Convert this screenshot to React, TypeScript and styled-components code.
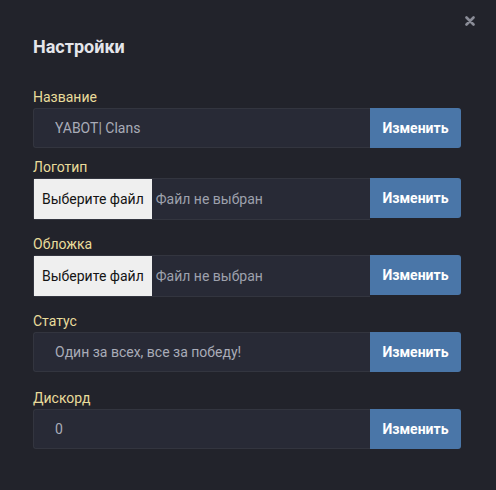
import * as React from 'react'
import styled, { createGlobalStyle } from 'styled-components'

const GlobalStyle = createGlobalStyle`
html, body {
    margin: 0;
    padding: 0;
    background: #22232b;
}
body {
    font-family: Roboto, "Noto Sans", "Liberation Sans", sans-serif;
    width: 496px;
    height: 490px;
    overflow: hidden;
}
`

const Panel = styled.div`
position: relative;
box-sizing: border-box;
width: 496px;
height: 490px;
padding: 36px 35px 0 33px;
background: #22232b;
`

const Title = styled.div`
font-size: 18px;
line-height: 21px;
font-weight: 700;
color: #e4e5ea;
`

const Close = styled.div`
position: absolute;
top: 16px;
right: 21px;
width: 10px;
height: 10px;
cursor: pointer;
color: #8a8c97;
display: flex;
&:hover {
    opacity: 0.7;
}
`

const Field = styled.div<{ $top: number }>`
margin-top: ${p => p.$top}px;
`

const Label = styled.div`
font-size: 14px;
line-height: 16px;
color: #e9dc9b;
margin-bottom: 3px;
`

const Row = styled.div`
display: flex;
align-items: flex-start;
`

const Box = styled.div<{ $file?: boolean }>`
box-sizing: border-box;
flex: 1;
height: ${p => (p.$file ? 42 : 40)}px;
display: flex;
align-items: center;
padding-left: ${p => (p.$file ? 0 : 21)}px;
background: #282a36;
border: 1px solid #33353f;
border-right: none;
border-radius: 3px 0 0 3px;
font-size: 14px;
color: #a9acb8;
`

const Value = styled.input`
flex: 1;
min-width: 0;
border: none;
outline: none;
background: transparent;
padding: 0;
font-family: inherit;
font-size: 14px;
color: #a9acb8;
`

const PickButton = styled.span`
box-sizing: border-box;
height: 100%;
display: flex;
align-items: center;
padding: 0 8px;
background: #efefef;
color: #141414;
font-size: 14px;
margin-right: 4px;
`

const FileName = styled.span`
color: #9ea1ad;
`

const SaveButton = styled.button`
box-sizing: border-box;
width: 91px;
height: 40px;
border: none;
border-radius: 0 3px 3px 0;
background: #4a76a8;
color: #fff;
font-family: inherit;
font-size: 14px;
font-weight: 700;
cursor: pointer;
padding: 0;
&:hover {
    background: #5181b8;
}
`

type FieldData = { label: string, value?: string, file?: boolean, top: number }

const fields: FieldData[] = [
    { label: 'Название', value: 'YABOT| Clans', top: 32 },
    { label: 'Логотип', file: true, top: 11 },
    { label: 'Обложка', file: true, top: 16 },
    { label: 'Статус', value: 'Один за всех, все за победу!', top: 16 },
    { label: 'Дискорд', value: '0', top: 18 },
]

function SettingsField({ field }: { field: FieldData }) {
    return (
        <Field $top={field.top}>
            <Label>{field.label}</Label>
            <Row>
                {field.file ? (
                    <Box $file>
                        <PickButton>Выберите файл</PickButton>
                        <FileName>Файл не выбран</FileName>
                    </Box>
                ) : (
                    <Box>
                        <Value defaultValue={field.value} />
                    </Box>
                )}
                <SaveButton>Изменить</SaveButton>
            </Row>
        </Field>
    )
}

export default function App() {
    return (
        <>
            <GlobalStyle />
            <Panel>
                <Close>
                    <svg width="10" height="10" viewBox="0 0 10 10">
                        <path d="M1.5 1.5 L8.5 8.5 M8.5 1.5 L1.5 8.5" stroke="currentColor" strokeWidth="2.6" strokeLinecap="round" />
                    </svg>
                </Close>
                <Title>Настройки</Title>
                {fields.map(f => <SettingsField key={f.label} field={f} />)}
            </Panel>
        </>
    )
}
